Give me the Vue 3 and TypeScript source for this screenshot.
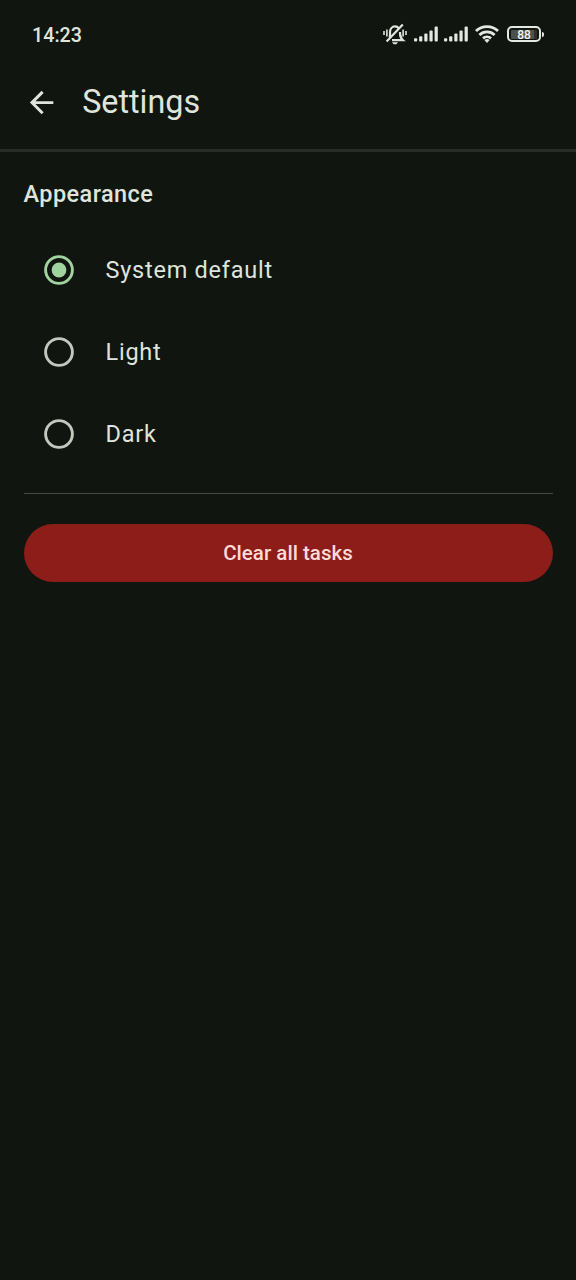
<script setup lang="ts">
import { ref } from 'vue'

type Theme = 'system' | 'light' | 'dark'

const options: { value: Theme; label: string }[] = [
  { value: 'system', label: 'System default' },
  { value: 'light', label: 'Light' },
  { value: 'dark', label: 'Dark' },
]
const selected = ref<Theme>('system')
const bars = [3.2, 5.2, 8, 11, 15]
</script>

<template>
  <div class="screen">
    <div class="status">
      <span class="time">14:23</span>
      <div class="indicators">
        <svg class="bell" width="24" height="24" viewBox="0 0 24 24" fill="none" stroke="#dfe4dc">
          <path d="M6.6 15.4C7.2 14 7 12.5 7 10.5C7 7.2 9 4.4 12 4.4C13.8 4.4 15 5.2 15.9 6.4M17 10C17 14 17.2 15.6 20 18.2H9" stroke-width="2.2" />
          <path d="M3.6 19.4L19.8 2.4" stroke-width="2.2" />
          <path d="M9 20.2H15L13.4 22.2H10.6Z" fill="#dfe4dc" stroke="none" />
          <path d="M1 9V13M3.9 7.5V14.5M20.1 7.5V14.5M23 9V13" stroke-width="1.6" />
        </svg>
        <svg v-for="n in 2" :key="n" class="signal" width="24" height="16" viewBox="0 0 24 16" fill="#e4e8e1">
          <rect v-for="(h, i) in bars" :key="i" :x="i * 5.15" :y="15.5 - h" width="3.2" :height="h" rx="1" />
        </svg>
        <svg class="wifi" width="26" height="20" viewBox="0 0 26 20" fill="none" stroke="#e4e8e1" stroke-width="2.8">
          <path d="M2 7.1C8 1 18 1 24 7.1M5.4 11C9.6 6.9 16.4 6.9 20.6 11M9 14.4C11.3 12.3 14.7 12.3 17 14.4" />
          <path d="M10.4 15.9Q13 14.3 15.6 15.9L13 19Z" fill="#e4e8e1" stroke="none" />
        </svg>
        <div class="battery">
          <div class="cell"><div class="charge">88</div></div>
          <div class="cap"></div>
        </div>
      </div>
    </div>

    <header class="appbar">
      <svg width="35.2" height="35.2" viewBox="0 0 24 24" fill="#dfe4dc">
        <path d="M20 11H7.83l5.59-5.59L12 4l-8 8 8 8 1.41-1.41L7.83 13H20z" />
      </svg>
      <h1>Settings</h1>
    </header>

    <main>
      <h2>Appearance</h2>
      <div class="options" role="radiogroup">
        <div
          v-for="o in options"
          :key="o.value"
          class="option"
          :class="{ checked: selected === o.value }"
          role="radio"
          :aria-checked="selected === o.value"
          @click="selected = o.value"
        >
          <svg class="radio" width="30" height="30" viewBox="0 0 30 30">
            <circle cx="15" cy="15" r="13.4" fill="none" stroke="currentColor" stroke-width="2.9" />
            <circle v-if="selected === o.value" cx="15" cy="15" r="7.4" fill="currentColor" />
          </svg>
          <span>{{ o.label }}</span>
        </div>
      </div>
      <div class="divider"></div>
      <button class="clear">Clear all tasks</button>
    </main>
  </div>
</template>

<style>
body {
  margin: 0;
  background: #10150f;
}
</style>

<style scoped>
.screen {
  box-sizing: border-box;
  width: 576px;
  height: 1280px;
  overflow: hidden;
  background: #10150f;
  color: #dfe4dc;
  font-family: Roboto, "Liberation Sans", sans-serif;
}
.status {
  box-sizing: border-box;
  height: 68px;
  padding: 0 32px;
  display: flex;
  align-items: center;
  justify-content: space-between;
}
.time {
  font-size: 19.7px;
  font-weight: 500;
  line-height: 24px;
  padding-top: 4px;
}
.indicators {
  display: flex;
  align-items: center;
}
.indicators svg {
  display: block;
}
.bell {
  margin-right: 7px;
}
.signal {
  margin-right: 6px;
}
.battery {
  display: flex;
  align-items: center;
  margin-left: 7px;
}
.cell {
  box-sizing: border-box;
  width: 34px;
  height: 16px;
  border: 2px solid #e4e8e1;
  border-radius: 5px;
  padding: 1.5px 2px;
  display: flex;
}
.charge {
  width: 26px;
  height: 9px;
  border-radius: 1px;
  background: linear-gradient(90deg, #4c514b 88%, #2c312b 88%);
  color: #f2f5ef;
  font-size: 12px;
  font-weight: 500;
  line-height: 10px;
  text-align: center;
}
.cap {
  width: 2px;
  height: 5px;
  margin-left: 1px;
  border-radius: 0 2px 2px 0;
  background: #e4e8e1;
}
.appbar {
  box-sizing: border-box;
  height: 84px;
  padding: 0 24px 12.5px 23.5px;
  display: flex;
  align-items: center;
  border-bottom: 3px solid #282d28;
}
.appbar h1 {
  margin: 0 0 0 23.5px;
  font-size: 32.3px;
  line-height: 40px;
  font-weight: 400;
}
main {
  padding: 25px 23.5px 0;
}
h2 {
  margin: 0;
  font-size: 23.5px;
  line-height: 35px;
  font-weight: 500;
  letter-spacing: 0.42px;
}
.options {
  padding-top: 17px;
}
.option {
  height: 82px;
  padding-left: 20.5px;
  display: flex;
  align-items: center;
  font-size: 23.5px;
  letter-spacing: 0.76px;
}
.radio {
  margin-right: 31.5px;
  color: #c1c9be;
}
.checked .radio {
  color: #a1d39e;
}
.divider {
  height: 1.5px;
  margin-top: 17.5px;
  background: #414941;
}
.clear {
  display: block;
  width: 100%;
  height: 58px;
  margin-top: 30px;
  padding: 0;
  border: 0;
  border-radius: 29px;
  background: #8c1d18;
  color: #ffdad6;
  font-family: inherit;
  font-size: 20.5px;
  font-weight: 500;
  letter-spacing: 0.02px;
}
</style>
